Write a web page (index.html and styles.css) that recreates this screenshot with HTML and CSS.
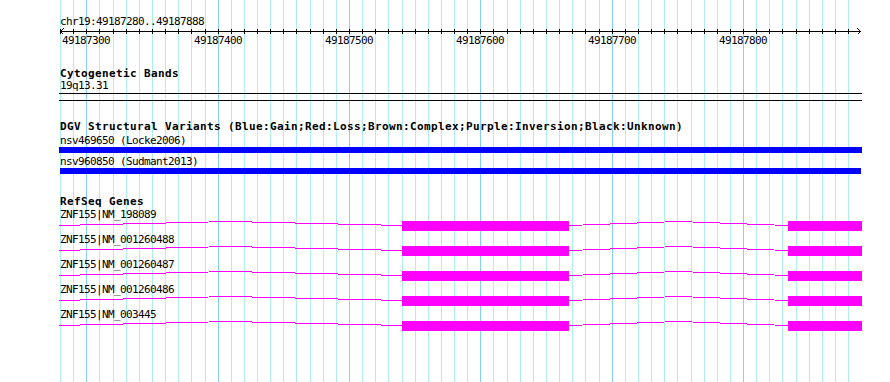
FILE: index.html
```html
<!DOCTYPE html>
<html>
<head>
<meta charset="utf-8">
<title>chr19:49187280..49187888</title>
<link rel="stylesheet" href="styles.css">
</head>
<body>
<div class="browser">
  <svg class="grid" width="890" height="382" viewBox="0 0 890 382" shape-rendering="crispEdges">
    <path class="grid-minor" d="M60.5 0V382M73.5 0V382M99.5 0V382M113.5 0V382M126.5 0V382M139.5 0V382M152.5 0V382M165.5 0V382M178.5 0V382M191.5 0V382M205.5 0V382M231.5 0V382M244.5 0V382M257.5 0V382M270.5 0V382M283.5 0V382M296.5 0V382M310.5 0V382M323.5 0V382M336.5 0V382M362.5 0V382M375.5 0V382M388.5 0V382M402.5 0V382M415.5 0V382M428.5 0V382M441.5 0V382M454.5 0V382M467.5 0V382M493.5 0V382M507.5 0V382M520.5 0V382M533.5 0V382M546.5 0V382M559.5 0V382M572.5 0V382M585.5 0V382M599.5 0V382M625.5 0V382M638.5 0V382M651.5 0V382M664.5 0V382M677.5 0V382M691.5 0V382M704.5 0V382M717.5 0V382M730.5 0V382M756.5 0V382M769.5 0V382M782.5 0V382M796.5 0V382M809.5 0V382M822.5 0V382M835.5 0V382M848.5 0V382"/>
    <path class="grid-major" d="M86.5 0V382M218.5 0V382M349.5 0V382M480.5 0V382M612.5 0V382M743.5 0V382"/>
  </svg>

  <section class="ruler">
    <div class="ref-name">chr19:49187280..49187888</div>
    <svg class="axis" width="890" height="7" viewBox="0 0 890 7" shape-rendering="crispEdges">
      <path class="axis-line" d="M60 3.5H861"/>
      <path class="axis-ticks" d="M60.5 1V6M73.5 1V6M86.5 1V6M99.5 1V6M113.5 1V6M126.5 1V6M139.5 1V6M152.5 1V6M165.5 1V6M178.5 1V6M191.5 1V6M205.5 1V6M218.5 1V6M231.5 1V6M244.5 1V6M257.5 1V6M270.5 1V6M283.5 1V6M296.5 1V6M310.5 1V6M323.5 1V6M336.5 1V6M349.5 1V6M362.5 1V6M375.5 1V6M388.5 1V6M402.5 1V6M415.5 1V6M428.5 1V6M441.5 1V6M454.5 1V6M467.5 1V6M480.5 1V6M493.5 1V6M507.5 1V6M520.5 1V6M533.5 1V6M546.5 1V6M559.5 1V6M572.5 1V6M585.5 1V6M599.5 1V6M612.5 1V6M625.5 1V6M638.5 1V6M651.5 1V6M664.5 1V6M677.5 1V6M691.5 1V6M704.5 1V6M717.5 1V6M730.5 1V6M743.5 1V6M756.5 1V6M769.5 1V6M782.5 1V6M796.5 1V6M809.5 1V6M822.5 1V6M835.5 1V6M848.5 1V6"/>
      <polyline class="axis-arrow" points="63.5,0.5 60.5,3.5 63.5,6.5"/>
      <polyline class="axis-arrow" points="857.5,0.5 860.5,3.5 857.5,6.5"/>
    </svg>
    <div class="tick-labels">
      <span class="tick-label" style="left:62px">49187300</span>
      <span class="tick-label" style="left:194px">49187400</span>
      <span class="tick-label" style="left:325px">49187500</span>
      <span class="tick-label" style="left:456px">49187600</span>
      <span class="tick-label" style="left:588px">49187700</span>
      <span class="tick-label" style="left:719px">49187800</span>
    </div>
  </section>

  <section class="track track-cyto">
    <h2 class="track-title">Cytogenetic Bands</h2>
    <div class="feat-label">19q13.31</div>
    <div class="band"></div>
  </section>

  <section class="track track-dgv">
    <h2 class="track-title">DGV Structural Variants (Blue:Gain;Red:Loss;Brown:Complex;Purple:Inversion;Black:Unknown)</h2>
    <div class="feat-label">nsv469650 (Locke2006)</div>
    <div class="sv-bar"></div>
    <div class="feat-label feat-label-gap">nsv960850 (Sudmant2013)</div>
    <div class="sv-bar sv-bar-second"></div>
  </section>

  <section class="track track-genes">
    <h2 class="track-title">RefSeq Genes</h2>
    <div class="gene">
      <div class="feat-label">ZNF155|NM_198089</div>
      <svg class="gene-model" width="890" height="13" viewBox="0 0 890 13" shape-rendering="crispEdges">
        <polyline class="intron" points="59,4.5 230.5,0.5 402,4.5"/>
        <polyline class="intron" points="569,4.5 678.5,0.5 788,4.5"/>
        <rect class="exon" x="402" y="0" width="167" height="10"/>
        <rect class="exon" x="788" y="0" width="74" height="10"/>
      </svg>
    </div>
    <div class="gene">
      <div class="feat-label">ZNF155|NM_001260488</div>
      <svg class="gene-model" width="890" height="13" viewBox="0 0 890 13" shape-rendering="crispEdges">
        <polyline class="intron" points="59,4.5 230.5,0.5 402,4.5"/>
        <polyline class="intron" points="569,4.5 678.5,0.5 788,4.5"/>
        <rect class="exon" x="402" y="0" width="167" height="10"/>
        <rect class="exon" x="788" y="0" width="74" height="10"/>
      </svg>
    </div>
    <div class="gene">
      <div class="feat-label">ZNF155|NM_001260487</div>
      <svg class="gene-model" width="890" height="13" viewBox="0 0 890 13" shape-rendering="crispEdges">
        <polyline class="intron" points="59,4.5 230.5,0.5 402,4.5"/>
        <polyline class="intron" points="569,4.5 678.5,0.5 788,4.5"/>
        <rect class="exon" x="402" y="0" width="167" height="10"/>
        <rect class="exon" x="788" y="0" width="74" height="10"/>
      </svg>
    </div>
    <div class="gene">
      <div class="feat-label">ZNF155|NM_001260486</div>
      <svg class="gene-model" width="890" height="13" viewBox="0 0 890 13" shape-rendering="crispEdges">
        <polyline class="intron" points="59,4.5 230.5,0.5 402,4.5"/>
        <polyline class="intron" points="569,4.5 678.5,0.5 788,4.5"/>
        <rect class="exon" x="402" y="0" width="167" height="10"/>
        <rect class="exon" x="788" y="0" width="74" height="10"/>
      </svg>
    </div>
    <div class="gene">
      <div class="feat-label">ZNF155|NM_003445</div>
      <svg class="gene-model" width="890" height="13" viewBox="0 0 890 13" shape-rendering="crispEdges">
        <polyline class="intron" points="59,4.5 230.5,0.5 402,4.5"/>
        <polyline class="intron" points="569,4.5 678.5,0.5 788,4.5"/>
        <rect class="exon" x="402" y="0" width="167" height="10"/>
        <rect class="exon" x="788" y="0" width="74" height="10"/>
      </svg>
    </div>
  </section>
</div>
</body>
</html>
```

FILE: styles.css
```css
html, body {
  margin: 0;
  padding: 0;
  background: #ffffff;
}

.browser {
  position: relative;
  width: 890px;
  height: 382px;
  overflow: hidden;
  background: #ffffff;
  color: #000000;
  font-family: "DejaVu Sans Mono", "Liberation Mono", monospace;
  font-size: 11px;
  line-height: 12px;
  letter-spacing: -0.623px;
}

.grid {
  position: absolute;
  left: 0;
  top: 0;
  display: block;
}

.grid-minor {
  stroke: #afeeee;
  stroke-width: 1;
  fill: none;
}

.grid-major {
  stroke: #87cefa;
  stroke-width: 1;
  fill: none;
}

.ruler,
.track {
  position: relative;
}

.ruler {
  padding-top: 16px;
}

.ref-name {
  margin-left: 60px;
  height: 12px;
  white-space: nowrap;
}

.axis {
  display: block;
}

.axis-line,
.axis-ticks,
.axis-arrow {
  stroke: #000000;
  stroke-width: 1;
  fill: none;
}

.tick-labels {
  position: relative;
  height: 12px;
}

.tick-label {
  position: absolute;
  top: 0;
  white-space: nowrap;
}

.track-title {
  margin: 0 0 0 60px;
  height: 12px;
  font-size: 11px;
  font-weight: bold;
  letter-spacing: 0.377px;
  white-space: nowrap;
}

.feat-label {
  margin-left: 60px;
  height: 12px;
  white-space: nowrap;
}

.track-cyto {
  margin-top: 21px;
}

.band {
  margin: 1px 0 0 59px;
  width: 803px;
  height: 6px;
  border-top: 1px solid #000000;
  border-bottom: 1px solid #000000;
}

.track-dgv {
  margin-top: 20px;
}

.track-dgv .track-title {
  margin-bottom: 2px;
}

.sv-bar {
  margin-left: 59px;
  width: 803px;
  height: 6px;
  background: #0000ff;
}

.feat-label-gap {
  margin-top: 3px;
}

.sv-bar-second {
  margin-left: 60px;
  width: 801px;
}

.track-genes {
  margin-top: 22px;
}

.track-genes .track-title {
  margin-bottom: 1px;
}

.gene-model {
  display: block;
}

.intron {
  stroke: #ff00ff;
  stroke-width: 1;
  fill: none;
}

.exon {
  fill: #ff00ff;
}
```
